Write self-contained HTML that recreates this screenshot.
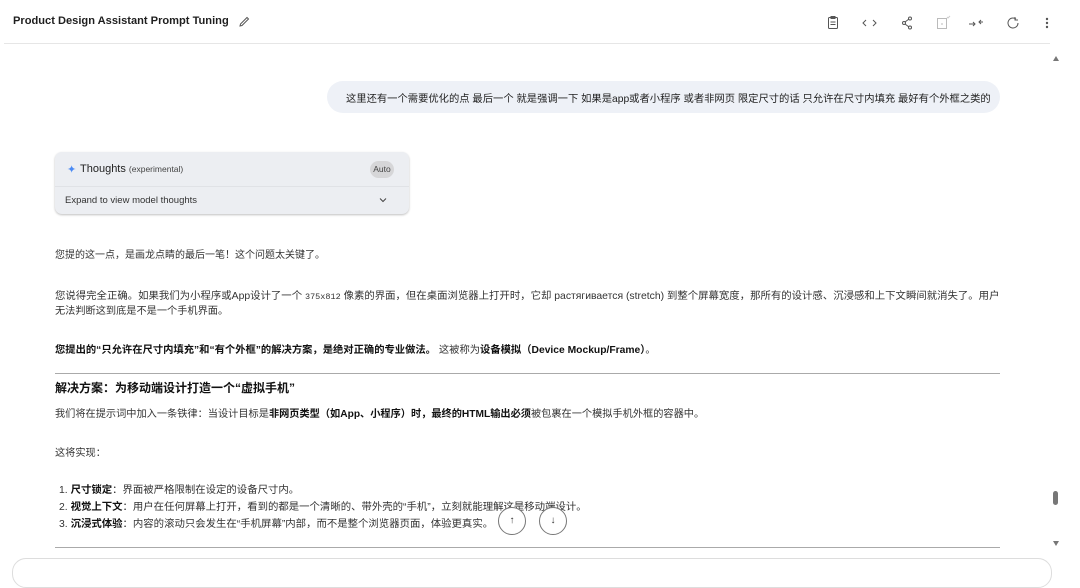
<!DOCTYPE html>
<html><head><meta charset="utf-8"><style>
*{margin:0;padding:0;box-sizing:border-box}
body{width:1080px;height:564px;overflow:hidden;background:#fff;font-family:"Liberation Sans","Noto Sans CJK SC",sans-serif;color:#1f1f1f;position:relative}
.abs{position:absolute;white-space:nowrap}
.t{font-size:10.2px;color:#333}
b{font-weight:700;color:#111}
</style></head><body>
<div class="abs" style="left:13px;top:15px;font-size:11.1px;font-weight:700;color:#1f1f1f">Product Design Assistant Prompt Tuning</div>
<svg class="abs" style="left:238px;top:16px" width="12" height="12" viewBox="0 0 12 12"><path d="M2 10 L2.5 8 L9 1.5 L10.5 3 L4 9.5 Z" fill="none" stroke="#555" stroke-width="1"/></svg>
<div class="abs" style="left:4px;top:43px;width:1046px;height:1px;background:#e6e6e6"></div>
<svg class="abs" style="left:825px;top:14px" width="230" height="18" viewBox="0 0 230 18" fill="none" stroke="#555" stroke-width="1">
<rect x="3.5" y="3.5" width="9" height="11" rx="1"/><path d="M6 2.5h4v2H6z M5.5 8h5 M5.5 10.5h5"/>
<path d="M41 6l-3 3 3 3 M48 6l3 3-3 3"/>
<circle cx="79" cy="9" r="1.5"/><circle cx="85" cy="4.5" r="1.5"/><circle cx="85" cy="13.5" r="1.5"/><path d="M80 8l4-3 M80 10l4 3"/>
<rect x="112.5" y="4.5" width="9" height="10" stroke="#bbb"/><path d="M116 10h2" stroke="#bbb"/><path d="M122 3l1 1 2-2" stroke="#ccc"/>
<path d="M144 10h6 M148 8l2 2-2 2 M158 8h-4 M156 6l-2 2 2 2"/>
<path d="M191 5a5 5 0 1 0 2 4 M190 3v3h3"/>
<circle cx="222" cy="5" r=".7" fill="#555"/><circle cx="222" cy="9" r=".7" fill="#555"/><circle cx="222" cy="13" r=".7" fill="#555"/>
</svg>
<div class="abs" style="left:1053px;top:56px;width:0;height:0;border-left:3px solid transparent;border-right:3px solid transparent;border-bottom:5px solid #777"></div>
<div class="abs" style="left:1053px;top:491px;width:5px;height:14px;border-radius:3px;background:#777"></div>
<div class="abs" style="left:1053px;top:541px;width:0;height:0;border-left:3px solid transparent;border-right:3px solid transparent;border-top:5px solid #777"></div>
<div class="abs" style="left:327px;top:81px;width:673px;height:32px;border-radius:16px;background:#eef1f7"></div>
<div class="abs" style="left:346px;top:90px;color:#222;font-size:10.3px">这里还有一个需要优化的点 最后一个 就是强调一下 如果是app或者小程序 或者非网页 限定尺寸的话 只允许在尺寸内填充 最好有个外框之类的</div>
<div class="abs" style="left:55px;top:152px;width:354px;height:62px;border-radius:7px;background:#eceef2;box-shadow:0 1px 2px rgba(0,0,0,.25)"></div>
<div class="abs" style="left:55px;top:186px;width:354px;height:1px;background:#e0e2e6"></div>
<div class="abs" style="left:67px;top:163px;font-size:11px;color:#4a8af4">✦</div>
<div class="abs" style="left:80px;top:163px;font-size:11px;color:#222">Thoughts <span style="font-size:8.5px;color:#444">(experimental)</span></div>
<div class="abs" style="left:370px;top:161px;width:24px;height:17px;border-radius:9px;background:#d6d6d8;font-size:8.5px;line-height:17px;text-align:center;color:#444">Auto</div>
<div class="abs" style="left:65px;top:195px;font-size:9.5px;color:#333">Expand to view model thoughts</div>
<svg class="abs" style="left:379px;top:197px" width="8" height="6" viewBox="0 0 8 6"><path d="M1 1.5l3 3 3-3" fill="none" stroke="#444" stroke-width="1"/></svg>
<div class="abs t" style="left:55px;top:246px;font-size:10px">您提的这一点，是画龙点睛的最后一笔！这个问题太关键了。</div>
<div class="abs t" style="left:55px;top:287px;font-size:10.4px">您说得完全正确。如果我们为小程序或App设计了一个 <span style="font-family:'Liberation Mono',monospace;font-size:8.5px">375x812</span> 像素的界面，但在桌面浏览器上打开时，它却 растягивается (stretch) 到整个屏幕宽度，那所有的设计感、沉浸感和上下文瞬间就消失了。用户</div>
<div class="abs t" style="left:55px;top:302px">无法判断这到底是不是一个手机界面。</div>
<div class="abs t" style="left:55px;top:341px;font-size:10.3px"><b>您提出的“只允许在尺寸内填充”和“有个外框”的解决方案，是绝对正确的专业做法。</b> 这被称为<b>设备模拟（Device Mockup/Frame）</b>。</div>
<div class="abs" style="left:55px;top:373px;width:945px;height:1px;background:#aaa"></div>
<div class="abs" style="left:55px;top:379px;font-size:12px;font-weight:700;color:#111">解决方案：为移动端设计打造一个“虚拟手机”</div>
<div class="abs t" style="left:55px;top:405px">我们将在提示词中加入一条铁律：当设计目标是<b>非网页类型（如App、小程序）时，最终的HTML输出必须</b>被包裹在一个模拟手机外框的容器中。</div>
<div class="abs t" style="left:55px;top:444px">这将实现：</div>
<div class="abs t" style="left:59px;top:481px;font-size:10.4px">1. <b>尺寸锁定</b>：界面被严格限制在设定的设备尺寸内。</div>
<div class="abs t" style="left:59px;top:498px;font-size:10.4px">2. <b>视觉上下文</b>：用户在任何屏幕上打开，看到的都是一个清晰的、带外壳的“手机”，立刻就能理解这是移动端设计。</div>
<div class="abs t" style="left:59px;top:515px;font-size:10.4px">3. <b>沉浸式体验</b>：内容的滚动只会发生在“手机屏幕”内部，而不是整个浏览器页面，体验更真实。</div>
<div class="abs" style="left:498px;top:507px;width:28px;height:28px;border-radius:50%;border:1px solid #777;background:#fff;font-size:10px;line-height:26px;text-align:center;color:#333">↑</div>
<div class="abs" style="left:539px;top:507px;width:28px;height:28px;border-radius:50%;border:1px solid #777;background:#fff;font-size:10px;line-height:26px;text-align:center;color:#333">↓</div>
<div class="abs" style="left:55px;top:547px;width:945px;height:1px;background:#aaa"></div>
<div class="abs" style="left:12px;top:558px;width:1040px;height:30px;border:1px solid #ddd;border-radius:14px;background:#fff"></div>
</body></html>
